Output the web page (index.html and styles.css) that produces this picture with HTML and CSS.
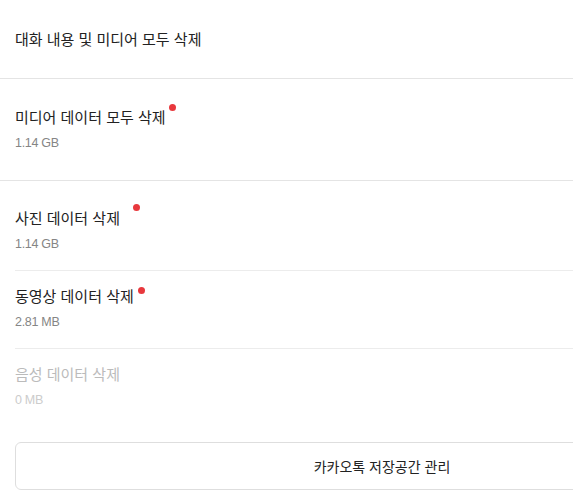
FILE: index.html
```html
<!DOCTYPE html>
<html lang="ko">
<head>
<meta charset="utf-8">
<title>저장공간</title>
<link rel="stylesheet" href="styles.css">
</head>
<body>
<div class="page">
  <div class="header">
    <div class="title">대화 내용 및 미디어 모두 삭제</div>
  </div>
  <div class="section">
    <div class="item">
      <div class="title"><span class="label">미디어 데이터 모두 삭제<span class="dot dot-all"></span></span></div>
      <div class="sub">1.14 GB</div>
    </div>
  </div>
  <div class="section section-list">
    <div class="item item-line">
      <div class="title"><span class="label">사진 데이터 삭제<span class="dot dot-photo"></span></span></div>
      <div class="sub">1.14 GB</div>
    </div>
    <div class="item item-line">
      <div class="title"><span class="label">동영상 데이터 삭제<span class="dot dot-video"></span></span></div>
      <div class="sub">2.81 MB</div>
    </div>
    <div class="item disabled">
      <div class="title"><span class="label">음성 데이터 삭제</span></div>
      <div class="sub">0 MB</div>
    </div>
    <div class="btn-wrap">
      <button class="btn">카카오톡 저장공간 관리</button>
    </div>
  </div>
</div>
</body>
</html>
```

FILE: styles.css
```css
html, body {
  margin: 0;
  padding: 0;
  background: #fff;
  overflow: hidden;
}
.page {
  width: 764px;
  font-family: "Liberation Sans", "Noto Sans CJK KR", sans-serif;
  color: #222;
}
.header {
  height: 79px;
  display: flex;
  align-items: center;
  padding: 2px 15px 0;
  box-sizing: border-box;
  border-bottom: 1px solid #e4e4e4;
}
.title {
  font-size: 15px;
  line-height: 20px;
  color: #222;
}
.label {
  position: relative;
  display: inline-block;
}
.section {
  padding: 13px 0 11px;
  border-bottom: 1px solid #e4e4e4;
}
.section-list {
  border-bottom: none;
  padding: 12px 0 0;
}
.item {
  margin-left: 15px;
  padding: 16px 0 17px;
  display: flex;
  flex-direction: column;
  gap: 6px;
}
.item-line {
  border-bottom: 1px solid #ececec;
}
.sub {
  font-size: 12.5px;
  line-height: 18px;
  color: #858585;
  letter-spacing: -0.3px;
}
.disabled .title { color: #bbb; }
.disabled .sub { color: #ccc; }
.dot {
  position: absolute;
  width: 7px;
  height: 7px;
  border-radius: 50%;
  background: #e8383d;
  left: 100%;
}
.dot-all { margin-left: 3px; top: -4px; }
.dot-photo { margin-left: 13px; top: -5px; }
.dot-video { margin-left: 4px; top: 0; }
.btn-wrap {
  padding: 16px 15px 0;
}
.btn {
  width: 100%;
  height: 48px;
  background: #fff;
  border: 1px solid #dedede;
  border-radius: 6px;
  font-family: "Liberation Sans", "Noto Sans CJK KR", sans-serif;
  font-size: 14px;
  color: #222;
  padding: 0;
}
```
